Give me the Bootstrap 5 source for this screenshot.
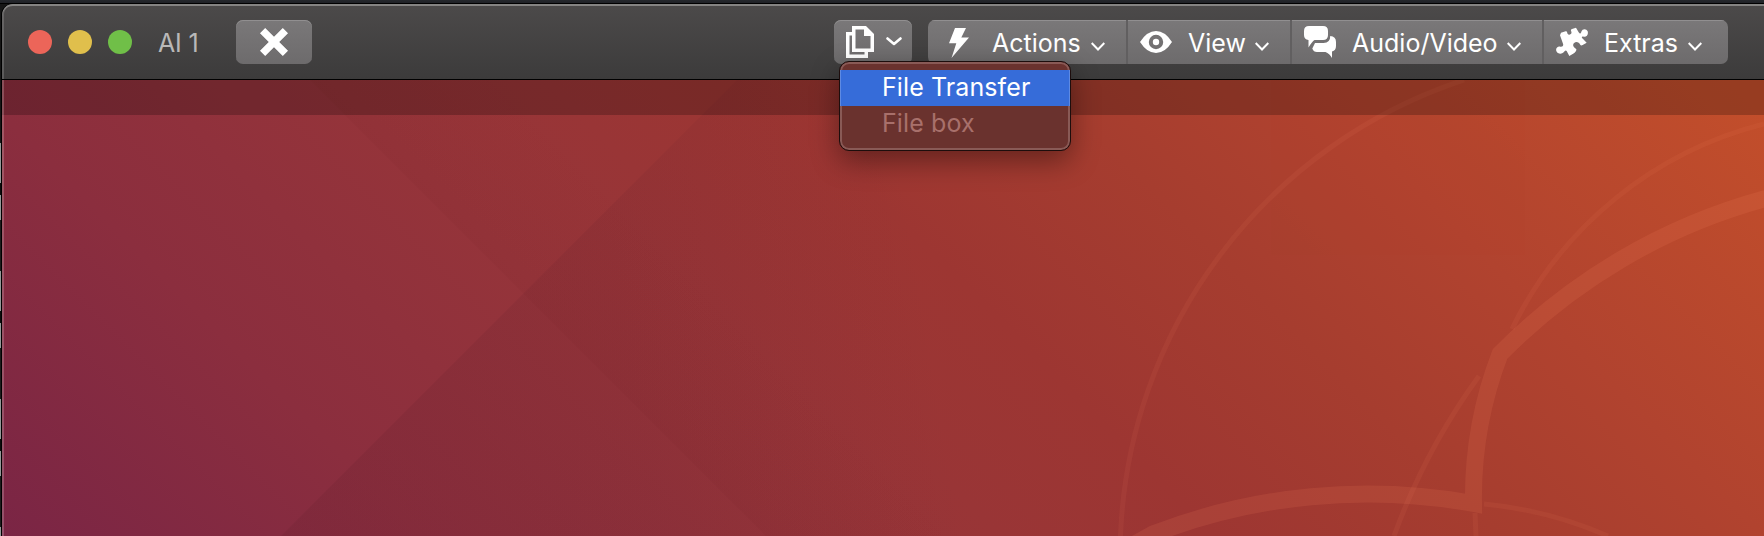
<!DOCTYPE html>
<html lang="en">
<head>
<meta charset="utf-8">
<title>AI 1</title>
<meta name="viewport" content="width=device-width, initial-scale=1">
<link href="https://cdn.jsdelivr.net/npm/bootstrap@5.3.0/dist/css/bootstrap.min.css" rel="stylesheet">
<style>
  body { height: 536px; overflow: hidden; font-family: Inter, "Liberation Sans", sans-serif; font-size: 25px; line-height: 36px; color: #fff;
    background: linear-gradient(#25282d, #202126 3px, #000 3px, #000 4px, #161616 4px); }
  .backdrop-strip { width: 1px; margin-top: 143px; flex: none;
    background: repeating-linear-gradient(#969899 0 40px, #0c0c0c 40px 52px, #969899 52px 77px, #1c1c1c 77px 128px); }
  .remote-window { margin: 4px 0 0; border-left: 1px solid #000; border-top-left-radius: 11px; overflow: hidden; }
  .title-strip { height: 76px; padding: 16px 36px 0 26px; background: linear-gradient(#4c4a4a, #3c3b3b);
    border-bottom: 1px solid #000; box-shadow: inset 0 2px #858483, inset 2px 0 rgba(255,255,255,.16); border-top-left-radius: 11px; z-index: 2; }
  .window-controls { height: 44px; }
  .light { width: 24px; height: 24px; border-radius: 50%; margin-right: 16px; }
  .light-close { background: #ec6559; } .light-min { background: #e0bf4c; } .light-zoom { background: #70bf48; }
  .machine-name { width: 88px; padding: 2px 0 0 10px; color: #b9b8b8; letter-spacing: -.2px; }
  .tool { height: 44px; padding: 0; border: 0; border-radius: 7px; color: #fff; font-size: 25px; line-height: 44px;
    background: linear-gradient(#7a7879, #6d6b6c); box-shadow: inset 0 1px #918f90; }
  .btn.tool:hover { color: #fff; background: linear-gradient(#7a7879, #6d6b6c); }
  .tool-close { width: 76px; }
  .tool-files { width: 78px; padding-left: 12px; }
  .files-chevron { margin-left: 12px; }
  .tool-group .tool { border-radius: 0; padding-left: 12px; }
  .tool-group .tool + .tool { border-left: 2px solid #615f60; }
  .tool-group { border-radius: 7px; overflow: hidden; margin-left: 16px; }
  .tool-group .tool-label { margin-left: 16px; padding-top: 1px; text-align: left; white-space: nowrap; }
  .tool-group .tool-actions { width: 198px; padding-left: 15px; }
  .tool-group .tool-actions .tool-label { margin-left: 17px; }
  .tool-view { width: 164px; } .tool-av { width: 252px; } .tool-extras { width: 186px; }
  .tool-actions .tool-label { width: 99px; } .tool-view .tool-label { width: 67px; }
  .tool-av .tool-label { width: 155px; } .tool-extras .tool-label { width: 84px; }
  .files-menu { top: 41px; left: 5px; width: 232px; height: 90px; padding: 8px 0 0; border: 1px solid #1d0d0c; border-radius: 10px;
    background: #6a322e; box-shadow: inset 0 0 0 2px #895a56, 0 10px 28px rgba(0,0,0,.38); z-index: 5; }
  .files-menu .dropdown-item { height: 36px; padding: 0 0 0 42px; font-size: 25px; letter-spacing: .1px; line-height: 35px; color: #a8706b; }
  .files-menu .dropdown-item.active { background: #366cd9; color: #fff; box-shadow: inset 1px 0 #5e8ae3, inset -1px 0 #5e8ae3; }
  svg { flex: none; display: block; }
</style>
</head>
<body class="d-flex">
<div class="backdrop-strip"></div>
<main class="remote-window flex-grow-1">
  <header class="title-strip d-flex align-items-start position-relative">
    <div class="window-controls d-flex align-items-center">
      <span class="light light-close"></span><span class="light light-min"></span><span class="light light-zoom"></span>
      <span class="machine-name">AI 1</span>
    </div>
    <button class="btn tool tool-close d-flex align-items-center justify-content-center" aria-label="Close">
      <svg width="30" height="30" viewBox="0 0 30 30" stroke="#fff" stroke-width="7.4"><path d="M3.600 3.600 26.400 26.400M26.400 3.600 3.600 26.400"/></svg>
    </button>
    <div class="ms-auto position-relative">
      <button class="btn tool tool-files d-flex align-items-center" aria-label="Files">
        <svg width="28" height="32" viewBox="0 0 28 32"><path fill="#fff" fill-rule="evenodd" d="M6 0H20L28 8V26H22V32H0V6H6ZM9.500 3.500V22.500H24.500V10H18V3.500ZM6 9.500H3.500V28.500H18.500V26H6Z"/></svg>
        <svg class="files-chevron" width="16" height="10" viewBox="0 0 16 10" fill="none" stroke="#fff" stroke-width="2.600" stroke-linecap="round" stroke-linejoin="round"><path d="M1.500 1.500 8 7 14.500 1.500"/></svg>
      </button>
      <div class="files-menu dropdown-menu show position-absolute">
        <a class="dropdown-item active">File Transfer</a>
        <a class="dropdown-item">File box</a>
      </div>
    </div>
    <div class="tool-group d-flex">
      <button class="btn tool tool-actions d-flex align-items-center">
        <svg width="32" height="32" viewBox="0 0 32 32"><path fill="#fff" d="M12 2H23L18.300 11.500H26L8.500 32 13.300 17.300H6Z"/></svg>
        <span class="tool-label">Actions</span>
        <svg class="mt-2" width="14" height="9" viewBox="0 0 14 9" fill="none" stroke="#fff" stroke-width="2"><path d="M.7 1 7 7.500 13.300 1"/></svg>
      </button>
      <button class="btn tool tool-view d-flex align-items-center">
        <svg width="32" height="32" viewBox="0 0 32 32"><path fill="#fff" fill-rule="evenodd" d="M0 16Q7 5 16 5T32 16Q25 27 16 27T0 16ZM16 8.800A7.200 7.200 0 1 0 16 23.200 7.200 7.200 0 1 0 16 8.800Z"/><circle cx="16" cy="16" r="3.200" fill="#fff"/></svg>
        <span class="tool-label">View</span>
        <svg class="mt-2" width="14" height="9" viewBox="0 0 14 9" fill="none" stroke="#fff" stroke-width="2"><path d="M.7 1 7 7.500 13.300 1"/></svg>
      </button>
      <button class="btn tool tool-av d-flex align-items-center">
        <svg width="32" height="32" viewBox="0 0 32 32" fill="#fff"><path d="M5 0H19Q24 0 24 5V9Q24 14 19 14H10.500Q8 15.500 4.500 21.500V14Q0 13.500 0 9V5Q0 0 5 0Z"/><path d="M26.200 10Q32 10.500 32 16V20Q32 24.500 28 25.500V32Q25.500 27.500 21.500 26H13Q9.500 26 8.300 22.500L11 17H19.500Q26.500 16.500 26.200 10Z"/></svg>
        <span class="tool-label">Audio/Video</span>
        <svg class="mt-2" width="14" height="9" viewBox="0 0 14 9" fill="none" stroke="#fff" stroke-width="2"><path d="M.7 1 7 7.500 13.300 1"/></svg>
      </button>
      <button class="btn tool tool-extras d-flex align-items-center">
        <svg width="32" height="32" viewBox="0 0 96 96"><path fill="#fff" d="M15 20 29 16C34 15 33 20 35 24 39 30 49 24 46 17 44 13 44 11 48 9L60 5 68 19C71 25 75 22 76 17 79 8 91 7 95 16 98 26 91 34 83 32 78 31 76 34 79 37L92 50 80 57C73 61 73 54 68 50 60 44 49 51 52 60 54 66 60 67 61 70 62 73 58 78 55 81L40 90 32 75C29 71 26 75 23 79 17 86 4 84 1 75-2 67 5 60 13 62 20 63 23 59 21 53L12 28Z"/></svg>
        <span class="tool-label">Extras</span>
        <svg class="mt-2" width="14" height="9" viewBox="0 0 14 9" fill="none" stroke="#fff" stroke-width="2"><path d="M.7 1 7 7.500 13.300 1"/></svg>
      </button>
    </div>
  </header>
  <svg width="1762" height="456" viewBox="2 80 1762 456">
    <defs>
      <linearGradient id="dusk" gradientUnits="userSpaceOnUse" x1="0" y1="536" x2="1092" y2="-556">
        <stop offset="0" stop-color="#7a2545"/><stop offset=".194" stop-color="#8b2e3e"/><stop offset=".36" stop-color="#95343a"/>
        <stop offset=".557" stop-color="#9d3632"/><stop offset=".687" stop-color="#a63d2f"/><stop offset=".808" stop-color="#b1432f"/><stop offset="1" stop-color="#c24e2b"/>
      </linearGradient>
      <linearGradient id="fold" gradientUnits="userSpaceOnUse" x1="350" y1="536" x2="950" y2="436">
        <stop offset="0" stop-color="#5c1c28" stop-opacity=".16"/><stop offset=".5" stop-color="#5c1c28" stop-opacity=".12"/><stop offset="1" stop-color="#5c1c28" stop-opacity="0"/>
      </linearGradient>
      <linearGradient id="crease" gradientUnits="userSpaceOnUse" x1="535" y1="305" x2="635" y2="205">
        <stop offset="0" stop-color="#701c20" stop-opacity=".09"/><stop offset="1" stop-color="#701c20" stop-opacity="0"/>
      </linearGradient>
    </defs>
    <path fill="url(#dusk)" d="M0 80H1764V536H0Z"/>
    <path fill="url(#fold)" d="M737 80H1764V536H281Z"/>
    <path fill="url(#crease)" d="M310 80H1764V536H766Z"/>
    <g fill="none" stroke="#ff8a66">
      <g stroke-width="5" opacity=".08">
        <path d="M1464 80A500 500 0 0 0 1120.500 536"/>
        <path d="M1764 124A385 385 0 0 0 1512 329M1479 376A650 650 0 0 0 1394 536M1475 513 1476 536M1484 504A410 410 0 0 1 1608 536"/>
      </g>
      <path opacity=".13" stroke-width="17" d="M1784 194 1764 199A590 590 0 0 0 1500 354A400 400 0 0 0 1473.500 503.500A596 596 0 0 0 1153 534L1135 544"/>
    </g>
    <path fill="#000" fill-opacity=".22" d="M2 80H1764V115H2Z"/>
    <path fill="#fff" fill-opacity=".2" d="M2 80H4V536H2Z"/>
  </svg>
</main>
<script src="https://cdn.jsdelivr.net/npm/bootstrap@5.3.0/dist/js/bootstrap.bundle.min.js"></script>
</body>
</html>
